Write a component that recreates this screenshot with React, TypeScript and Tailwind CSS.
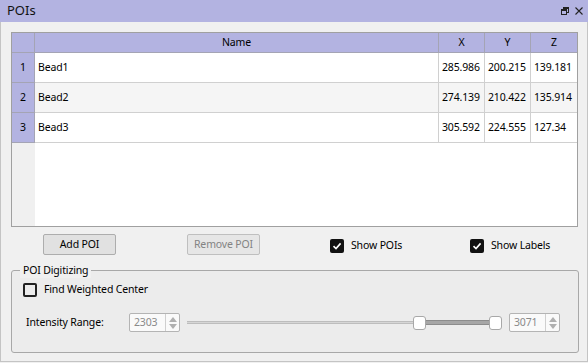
import React from "react";

const font = { fontFamily: '"Noto Sans", "Open Sans", sans-serif' };

function CheckBox({ checked }: { checked: boolean }) {
  if (checked) {
    return (
      <div className="w-[14px] h-[14px] rounded-[2px] bg-[#111111] flex items-center justify-center shrink-0">
        <svg width="10" height="10" viewBox="0 0 10 10">
          <path d="M1.5 5.2 L4 7.6 L8.6 2.4" stroke="#ffffff" strokeWidth="1.6" fill="none" />
        </svg>
      </div>
    );
  }
  return <div className="w-[14px] h-[14px] rounded-[2px] border-2 border-[#222222] shrink-0" />;
}

function SpinBox({ value }: { value: string }) {
  return (
    <div className="w-[51px] h-[19px] rounded-[2px] border border-[#b4b4b4] bg-[#fafafa] flex shrink-0">
      <div className="flex-1 pl-[4px] flex items-center text-[#8a8a8a]">{value}</div>
      <div className="w-[14px] border-l border-[#cfcfcf] flex flex-col items-center justify-center gap-[2px]">
        <svg width="8" height="5" viewBox="0 0 8 5"><path d="M0 5 L4 0 L8 5 Z" fill="#b0b0b0" /></svg>
        <svg width="8" height="5" viewBox="0 0 8 5"><path d="M0 0 L4 5 L8 0 Z" fill="#b0b0b0" /></svg>
      </div>
    </div>
  );
}

const rows = [
  { n: "1", name: "Bead1", x: "285.986", y: "200.215", z: "139.181", bg: "bg-white" },
  { n: "2", name: "Bead2", x: "274.139", y: "210.422", z: "135.914", bg: "bg-[#f5f5f5]" },
  { n: "3", name: "Bead3", x: "305.592", y: "224.555", z: "127.34", bg: "bg-white" },
];

export default function App() {
  return (
    <div className="w-[588px] h-[363px] bg-[#f0f0f0] text-[10.5px] tracking-[-0.15px] text-black flex flex-col overflow-hidden" style={font}>
      {/* Title bar */}
      <div className="h-[22px] bg-[#b3b3e1] flex items-center pl-[7px] pr-[5px] shrink-0">
        <span className="text-[13px] tracking-normal text-[#111111]">POIs</span>
        <div className="ml-auto flex items-center gap-[6px]">
          <svg width="8" height="8" viewBox="0 0 8 8">
            <rect x="2.5" y="0.5" width="5" height="5" fill="none" stroke="#222" />
            <rect x="0.5" y="2.5" width="5" height="5" fill="#b3b3e1" stroke="#222" />
            <rect x="0.5" y="2.5" width="5" height="1.5" fill="#222" />
            <rect x="2.5" y="0.5" width="5" height="1.5" fill="#222" />
          </svg>
          <svg width="8" height="8" viewBox="0 0 8 8">
            <path d="M0.5 0.5 L7.5 7.5 M7.5 0.5 L0.5 7.5" stroke="#222" strokeWidth="1.1" />
          </svg>
        </div>
      </div>

      {/* Body */}
      <div className="flex-1 flex flex-col px-[10px] pt-[10px] border-x border-b border-[#c4c4c4] mb-[1px]">
        {/* Table */}
        <div className="w-[567px] h-[195px] border border-[#a0a0a0] bg-white flex flex-col">
          <div className="grid grid-cols-[23px_404px_46px_46px_46px] h-[20px] bg-[#b3b3e1]">
            <div className="border-r border-b border-[#a4a4b4]" />
            <div className="border-r border-b border-[#a4a4b4] flex items-center justify-center">Name</div>
            <div className="border-r border-b border-[#a4a4b4] flex items-center justify-center">X</div>
            <div className="border-r border-b border-[#a4a4b4] flex items-center justify-center">Y</div>
            <div className="border-b border-[#a4a4b4] flex items-center justify-center">Z</div>
          </div>
          {rows.map((r) => (
            <div key={r.n} className={`grid grid-cols-[23px_404px_46px_46px_46px] h-[30px] ${r.bg}`}>
              <div className="bg-[#b3b3e1] border-r border-b border-[#a4a4b4] flex items-center justify-center">{r.n}</div>
              <div className="border-r border-b border-[#d0d0d0] flex items-center pl-[3px] pt-[1px]">{r.name}</div>
              <div className="border-r border-b border-[#d0d0d0] flex items-center pl-[3px] pt-[1px]">{r.x}</div>
              <div className="border-r border-b border-[#d0d0d0] flex items-center pl-[3px] pt-[1px]">{r.y}</div>
              <div className="border-b border-[#d0d0d0] flex items-center pl-[3px] pt-[1px]">{r.z}</div>
            </div>
          ))}
          <div className="flex-1 flex">
            <div className="w-[23px] bg-[#f0f0f0]" />
            <div className="flex-1 bg-white" />
          </div>
        </div>

        {/* Buttons row */}
        <div className="mt-[7px] h-[21px] flex items-center">
          <button className="ml-[32px] w-[73px] h-[21px] rounded-[2px] border border-[#adadad] bg-[#e1e1e1] flex items-center justify-center">
            Add POI
          </button>
          <button className="ml-[71px] w-[73px] h-[21px] rounded-[2px] border border-[#bfbfbf] bg-[#e6e6e6] text-[#838383] flex items-center justify-center">
            Remove POI
          </button>
          <div className="ml-[70px] w-[140px] flex items-center gap-[7px] pt-[2px]">
            <CheckBox checked />
            <span>Show POIs</span>
          </div>
          <div className="flex items-center gap-[7px] pt-[2px]">
            <CheckBox checked />
            <span>Show Labels</span>
          </div>
        </div>

        {/* Group box */}
        <div className="relative mt-[15px] w-[568px] h-[83px] border border-[#a8a8a8] rounded-[3px] bg-[#ececec] pl-[11px] pt-[12px]">
          <span className="absolute -top-[9px] left-[8px] px-[3px] bg-[#f0f0f0] leading-[16px]">POI Digitizing</span>
          <div className="h-[14px] flex items-center gap-[7px]">
            <CheckBox checked={false} />
            <span>Find Weighted Center</span>
          </div>
          <div className="mt-[16px] h-[19px] flex items-center">
            <div className="w-[106px] pl-[3px]">Intensity Range:</div>
            <SpinBox value="2303" />
            <div className="ml-[7px] w-[315px] h-[14px] relative shrink-0">
              <div className="absolute left-0 right-0 top-[5px] h-[3px] bg-[#d6d6d6] border-y border-[#bdbdbd]" />
              <div className="absolute left-[238px] w-[66px] top-[4px] h-[5px] bg-[#a6a6a6] border-y border-[#8c8c8c]" />
              <div className="absolute left-[226px] top-0 w-[13px] h-[14px] rounded-[3px] bg-white border border-[#a8a8a8]" />
              <div className="absolute left-[302px] top-0 w-[13px] h-[14px] rounded-[3px] bg-white border border-[#a8a8a8]" />
            </div>
            <div className="ml-[7px]">
              <SpinBox value="3071" />
            </div>
          </div>
        </div>
      </div>
    </div>
  );
}
